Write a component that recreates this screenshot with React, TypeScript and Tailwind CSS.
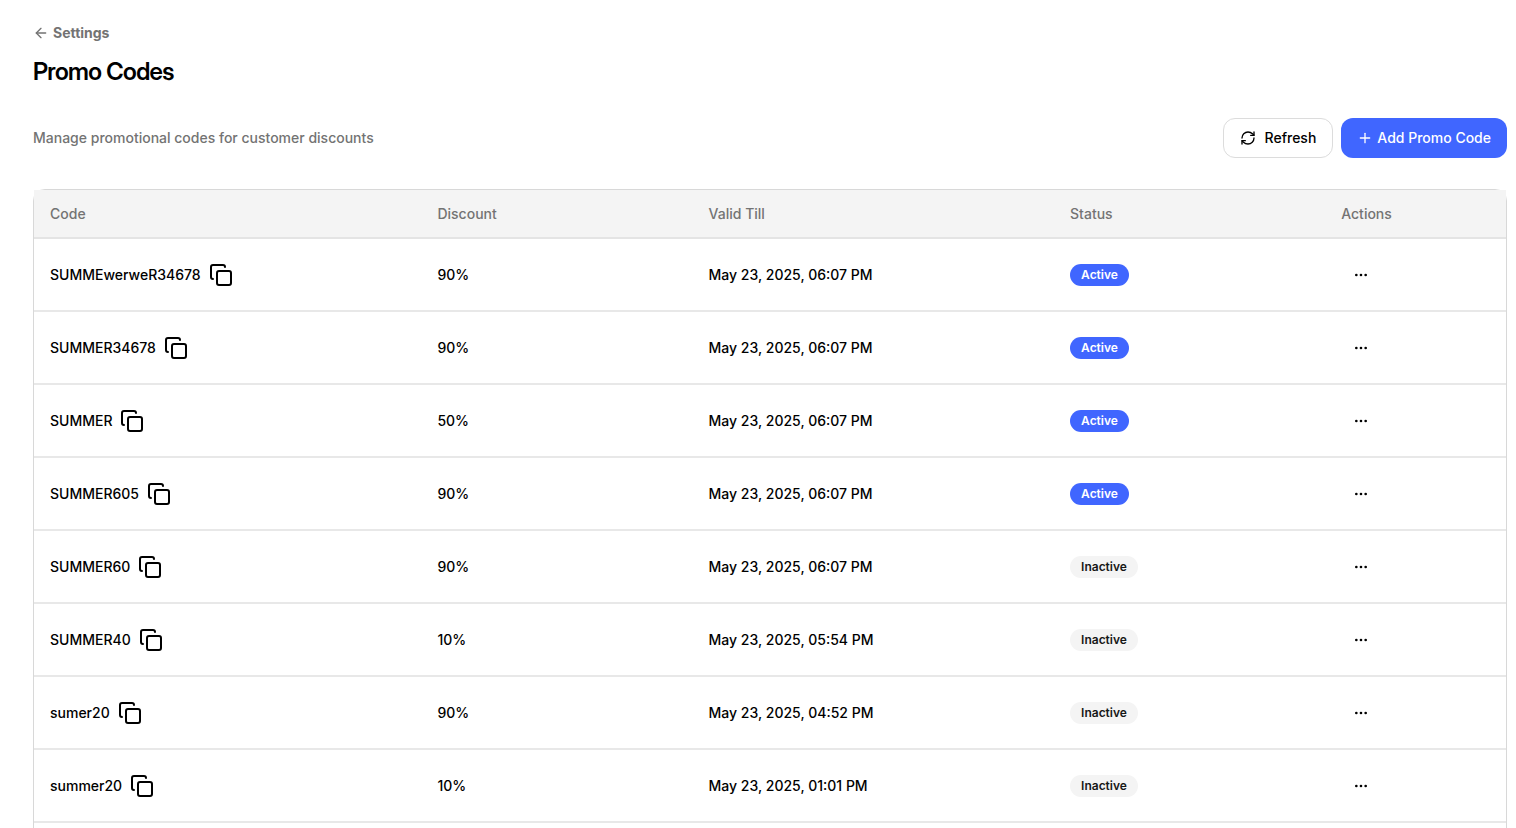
import { ArrowLeft, Copy, Ellipsis, Plus, RefreshCw } from "lucide-react";

type Promo = { code: string; discount: string; validTill: string; active: boolean };

const promos: Promo[] = [
  { code: "SUMMEwerweR34678", discount: "90%", validTill: "May 23, 2025, 06:07 PM", active: true },
  { code: "SUMMER34678", discount: "90%", validTill: "May 23, 2025, 06:07 PM", active: true },
  { code: "SUMMER", discount: "50%", validTill: "May 23, 2025, 06:07 PM", active: true },
  { code: "SUMMER605", discount: "90%", validTill: "May 23, 2025, 06:07 PM", active: true },
  { code: "SUMMER60", discount: "90%", validTill: "May 23, 2025, 06:07 PM", active: false },
  { code: "SUMMER40", discount: "10%", validTill: "May 23, 2025, 05:54 PM", active: false },
  { code: "sumer20", discount: "90%", validTill: "May 23, 2025, 04:52 PM", active: false },
  { code: "summer20", discount: "10%", validTill: "May 23, 2025, 01:01 PM", active: false },
];

function StatusBadge({ active }: { active: boolean }) {
  const tone = active ? "bg-[#4066ff] text-white" : "bg-[#f4f4f4] text-[#171717]";
  return (
    <span className={`inline-flex h-[22px] items-center rounded-full px-[11px] text-xs font-semibold ${tone}`}>
      {active ? "Active" : "Inactive"}
    </span>
  );
}

function PromoRow({ promo }: { promo: Promo }) {
  return (
    <tr className="h-[73px] border-b-2 border-[#e8e8e8]">
      <td className="px-4">
        <div className="flex items-center gap-2">
          <span>{promo.code}</span>
          <button type="button" aria-label={`Copy ${promo.code}`}>
            <Copy size={24} />
          </button>
        </div>
      </td>
      <td className="px-4">{promo.discount}</td>
      <td className="px-4">{promo.validTill}</td>
      <td className="px-4">
        <div className="flex">
          <StatusBadge active={promo.active} />
        </div>
      </td>
      <td className="px-4">
        <button
          type="button"
          aria-label={`Actions for ${promo.code}`}
          className="flex size-10 items-center justify-center rounded-xl"
        >
          <Ellipsis size={16} />
        </button>
      </td>
    </tr>
  );
}

export default function App() {
  return (
    <main className="h-screen overflow-y-auto bg-white pt-6 pr-[9px] pl-[33px] font-['Inter',sans-serif] text-sm font-medium text-black [scrollbar-width:none]">
      <a href="#settings" className="inline-flex h-[18px] items-center gap-1 font-bold text-[#737373]">
        <ArrowLeft size={16} />
        Settings
      </a>
      <h1 className="mt-[10px] font-['Inter_Display','Inter',sans-serif] text-2xl font-semibold tracking-tight">
        Promo Codes
      </h1>

      <div className="mt-[30px] flex items-center justify-between">
        <p className="text-[#737373]">Manage promotional codes for customer discounts</p>
        <div className="flex gap-2">
          <button
            type="button"
            className="flex h-10 items-center gap-[9px] rounded-xl border border-[#dcdcdc] px-4"
          >
            <RefreshCw size={16} />
            Refresh
          </button>
          <button
            type="button"
            className="flex h-10 items-center gap-1 rounded-xl bg-[#4066ff] px-4 text-white"
          >
            <Plus size={16} />
            Add Promo Code
          </button>
        </div>
      </div>

      <div className="mt-[31px] rounded-xl border border-[#d8d8d8] pb-8">
        <table className="w-full table-fixed border-collapse text-left">
          <colgroup>
            <col className="w-[26.32%]" />
            <col className="w-[18.42%]" />
            <col className="w-[24.56%]" />
            <col className="w-[18.42%]" />
            <col className="w-[12.28%]" />
          </colgroup>
          <thead>
            <tr className="h-12 border-b-2 border-[#e4e4e4] bg-[#f4f4f4] text-[#737373]">
              <th className="px-4 font-medium">Code</th>
              <th className="px-4 font-medium">Discount</th>
              <th className="px-4 font-medium">Valid Till</th>
              <th className="px-4 font-medium">Status</th>
              <th className="px-4 font-medium">Actions</th>
            </tr>
          </thead>
          <tbody>
            {promos.map((promo) => (
              <PromoRow key={promo.code} promo={promo} />
            ))}
          </tbody>
        </table>
      </div>
    </main>
  );
}
